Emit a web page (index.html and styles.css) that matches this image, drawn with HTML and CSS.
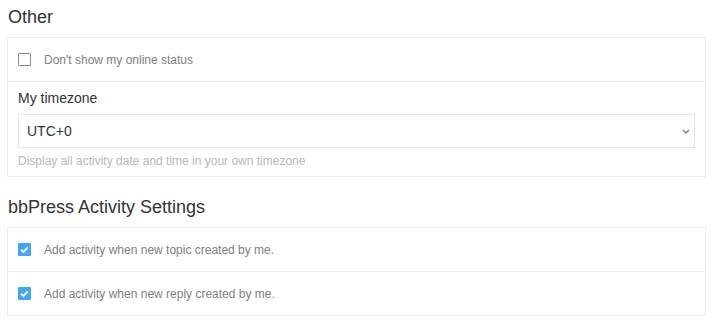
FILE: index.html
```html
<!DOCTYPE html>
<html>
<head>
<meta charset="utf-8">
<link rel="stylesheet" href="styles.css">
</head>
<body>
<div class="page">
  <h2 class="section-title">Other</h2>
  <div class="card">
    <label class="row check-row">
      <span class="box"></span>
      <span class="check-label">Don't show my online status</span>
    </label>
    <div class="row field-row">
      <div class="field-label">My timezone</div>
      <div class="select">
        <span class="select-value">UTC+0</span>
        <svg class="chevron" width="8" height="5" viewBox="0 0 8 5"><path d="M1 1 L4 3.8 L7 1" fill="none" stroke="#8a8a8a" stroke-width="1.7"/></svg>
      </div>
      <div class="help">Display all activity date and time in your own timezone</div>
    </div>
  </div>

  <h2 class="section-title second">bbPress Activity Settings</h2>
  <div class="card">
    <label class="row check-row">
      <span class="box checked"><svg width="13" height="13" viewBox="0 0 13 13"><path d="M3.2 6.8 L5.4 8.9 L9.8 4.4" fill="none" stroke="#fff" stroke-width="1.8"/></svg></span>
      <span class="check-label">Add activity when new topic created by me.</span>
    </label>
    <label class="row check-row">
      <span class="box checked"><svg width="13" height="13" viewBox="0 0 13 13"><path d="M3.2 6.8 L5.4 8.9 L9.8 4.4" fill="none" stroke="#fff" stroke-width="1.8"/></svg></span>
      <span class="check-label">Add activity when new reply created by me.</span>
    </label>
  </div>
</div>
</body>
</html>
```

FILE: styles.css
```css
html, body {
  margin: 0;
  padding: 0;
  background: #fff;
}
body {
  font-family: "Liberation Sans", Arial, Helvetica, sans-serif;
  color: #333;
}
.page {
  padding: 6px 18px 0 7px;
}
.section-title {
  margin: 0 0 9px 1px;
  font-size: 18px;
  line-height: 22px;
  font-weight: normal;
  color: #333;
}
.section-title.second {
  margin-top: 19px;
}
.card {
  border: 1px solid #ececec;
  width: 697px;
}
.row {
  display: block;
  padding: 0 10px;
}
.row + .row {
  border-top: 1px solid #ececec;
}
.check-row {
  display: flex;
  align-items: center;
  height: 43px;
}
.box {
  width: 13px;
  height: 13px;
  box-sizing: border-box;
  border: 1px solid #8a8a8a;
  border-radius: 1px;
  flex: none;
  display: flex;
}
.box.checked {
  border: none;
  background: #43a6f4;
}
.check-label {
  margin-left: 13px;
  font-size: 12px;
  color: #808080;
}
.field-row {
  padding-top: 8px;
  padding-bottom: 7px;
}
.field-label {
  font-size: 14px;
  line-height: 17px;
  color: #333;
  margin-bottom: 7px;
}
.select {
  height: 34px;
  box-sizing: border-box;
  border: 1px solid #e6e6e6;
  display: flex;
  align-items: center;
  justify-content: space-between;
  padding: 0 4px 0 8px;
}
.select-value {
  font-size: 14px;
  color: #333;
}
.chevron {
  display: block;
}
.help {
  margin-top: 6px;
  font-size: 12px;
  line-height: 15px;
  color: #b8b8b8;
}
```
